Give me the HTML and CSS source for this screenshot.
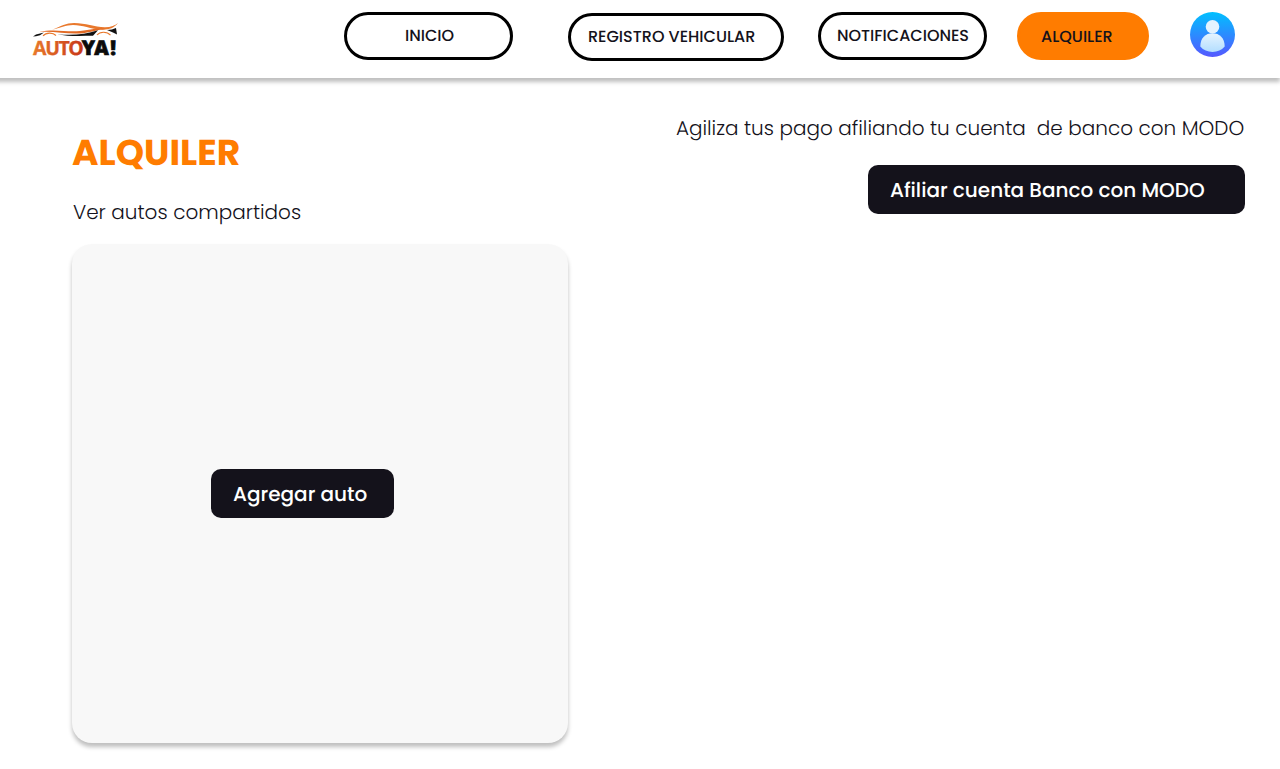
FILE: index.html
```html
<!DOCTYPE html>
<html lang="es">
<head>
<meta charset="utf-8">
<title>AutoYa! - Alquiler</title>
<link rel="stylesheet" href="styles.css">
</head>
<body>
<header class="topbar">
  <svg class="logo" width="90" height="40" viewBox="0 0 90 40" role="img" aria-label="AUTOYA!">
    <defs>
      <linearGradient id="flame" gradientUnits="userSpaceOnUse" x1="3" x2="51" y1="0" y2="0">
        <stop offset="0" stop-color="#e8792a"/>
        <stop offset="1" stop-color="#c93b1a"/>
      </linearGradient>
    </defs>
    <path d="M22 10C31 6 36 3 44 3C56 3 64 7.200 75 7.200C81 7.200 85 5.500 88 3C84 8 79 9.900 72 9.700C60 9.100 53 5.100 43 5.100C36 5.100 30 8 22 10Z" fill="#e9792d"/>
    <path d="M9 12C24 8.300 36 12.300 50 10.900C60 9.900 67 7.500 76 9C69 9 61 12.600 51 13.400C37 14.500 25 10.800 9 12Z" fill="#e26a24"/>
    <path d="M3 16.500L6 14.500L14 12.600L10 15.200L6 16.300Z" fill="#111"/>
    <path d="M27 14.200C42 15.800 55 14.500 68 10.200L63 15.800C50 15.800 38 16.500 27 14.200Z" fill="#111"/>
    <path d="M77 10C81 10 83 9 86 8L87 14.500L83 12.500Z" fill="#111"/>
    <path d="M13 15.800C16 12.300 23 12.300 26 15.500M67 15C70 11.300 77 11.300 80.500 15.200" fill="none" stroke="#e9792d" stroke-width="1.100"/>
    <text class="logo-text" x="3 15.200 28.400 38.200 51.700 64.300 80.200" y="35.300"><tspan class="logo-auto">AUTO</tspan><tspan class="logo-ya">YA!</tspan></text>
  </svg>
  <nav class="nav">
    <a class="pill pill-home">INICIO</a>
    <a class="pill pill-register">REGISTRO VEHICULAR</a>
    <a class="pill pill-notices">NOTIFICACIONES</a>
    <a class="pill pill-active">ALQUILER</a>
  </nav>
  <svg class="avatar" width="45" height="45" viewBox="0 0 45 45" aria-hidden="true">
    <defs>
      <linearGradient id="disc" x1="0" x2="0" y1="0" y2="1">
        <stop offset="0" stop-color="#00c0ff"/>
        <stop offset="1" stop-color="#5558ff"/>
      </linearGradient>
      <linearGradient id="body" x1="0" x2="0" y1="0" y2="1">
        <stop offset="0" stop-color="#e6f4ff"/>
        <stop offset="1" stop-color="#b3deff"/>
      </linearGradient>
    </defs>
    <circle cx="22.500" cy="22.500" r="22.500" fill="url(#disc)"/>
    <circle cx="22.500" cy="14.700" r="6.800" fill="#e3f3ff"/>
    <path d="M10.300 34.500C10.300 26 15.500 21.300 22.500 21.300S34.700 26 34.700 34.500C31.500 38.200 27.500 39.900 22.500 39.900S13.500 38.200 10.300 34.500Z" fill="url(#body)"/>
  </svg>
</header>
<main class="page">
  <section class="rental">
    <h1 class="title">ALQUILER</h1>
    <p class="lead lead-cars">Ver autos compartidos</p>
    <div class="card">
      <button class="btn btn-add">Agregar auto</button>
    </div>
  </section>
  <section class="bank">
    <p class="lead lead-bank">Agiliza tus pago afiliando tu cuenta&nbsp; de banco con MODO</p>
    <button class="btn btn-bank">Afiliar cuenta Banco con MODO</button>
  </section>
</main>
</body>
</html>
```
FILE: styles.css
```css
* {
  box-sizing: border-box;
}

body {
  margin: 0;
  background: #fff;
  color: #14121b;
  font-family: Poppins, Inter, "Open Sans", sans-serif;
  text-rendering: geometricPrecision;
  height: 769px;
  overflow: hidden;
}

.topbar {
  display: flex;
  align-items: flex-start;
  width: 1288px;
  height: 78px;
  margin-left: -8px;
  padding-left: 8px;
  background: #fff;
  box-shadow: 0 4px 4px rgba(0, 0, 0, .25);
}

.logo {
  margin: 20px 224px 0 30px;
}

.logo-text {
  font: 800 20px "Open Sans", sans-serif;
}

.logo-auto {
  fill: url(#flame);
  stroke: url(#flame);
  stroke-width: .3px;
  font-size: 19.500px;
  font-weight: 700;
}

.logo-ya {
  fill: #0b0b0b;
  stroke: #0b0b0b;
  stroke-width: .7px;
}

.nav {
  display: flex;
  align-items: flex-start;
  padding-top: 12px;
}

.pill {
  height: 48px;
  border: 3px solid #000;
  border-radius: 24px;
  font-size: 16px;
  font-weight: 500;
  line-height: 41px;
  white-space: nowrap;
}

.pill-home {
  width: 169px;
  padding-left: 58px;
  margin-right: 55px;
}

.pill-register {
  width: 216px;
  margin: 1px 34px 0 0;
  padding-left: 17px;
}

.pill-notices {
  width: 169px;
  margin-right: 30px;
  padding-left: 16px;
}

.pill-active {
  width: 132px;
  padding-left: 21px;
  border-color: #ff7c00;
  background: #ff7c00;
  line-height: 43px;
}

.avatar {
  margin: 12px 0 0 41px;
}

.page {
  display: flex;
  justify-content: space-between;
  padding: 0 35px 0 72px;
}

.rental {
  width: 496px;
  padding-top: 51px;
}

.title {
  margin: 0;
  color: #ff7c00;
  font-size: 36px;
  font-weight: 700;
  line-height: 48px;
}

.lead {
  margin: 0;
  font-size: 20px;
  font-weight: 300;
  line-height: 30px;
  white-space: nowrap;
}

.lead-cars {
  margin-top: 20px;
  padding-left: 1px;
}

.lead-bank {
  padding-right: .8px;
}

.card {
  display: flex;
  align-items: flex-start;
  height: 499px;
  margin-top: 17px;
  padding: 225px 0 0 139px;
  border-radius: 20px;
  background: #f8f8f8;
  box-shadow: 0 4px 4px rgba(0, 0, 0, .25);
}

.bank {
  display: flex;
  flex-direction: column;
  align-items: flex-end;
  padding-top: 35px;
}

.btn {
  height: 49px;
  padding: 2px 0 0 22px;
  border: 0;
  border-radius: 10px;
  background: #14121b;
  color: #fff;
  font: inherit;
  text-rendering: inherit;
  font-size: 20px;
  font-weight: 500;
  line-height: 47px;
  text-align: left;
  white-space: nowrap;
}

.btn-add {
  width: 183px;
}

.btn-bank {
  width: 377px;
  margin-top: 22px;
}
```
